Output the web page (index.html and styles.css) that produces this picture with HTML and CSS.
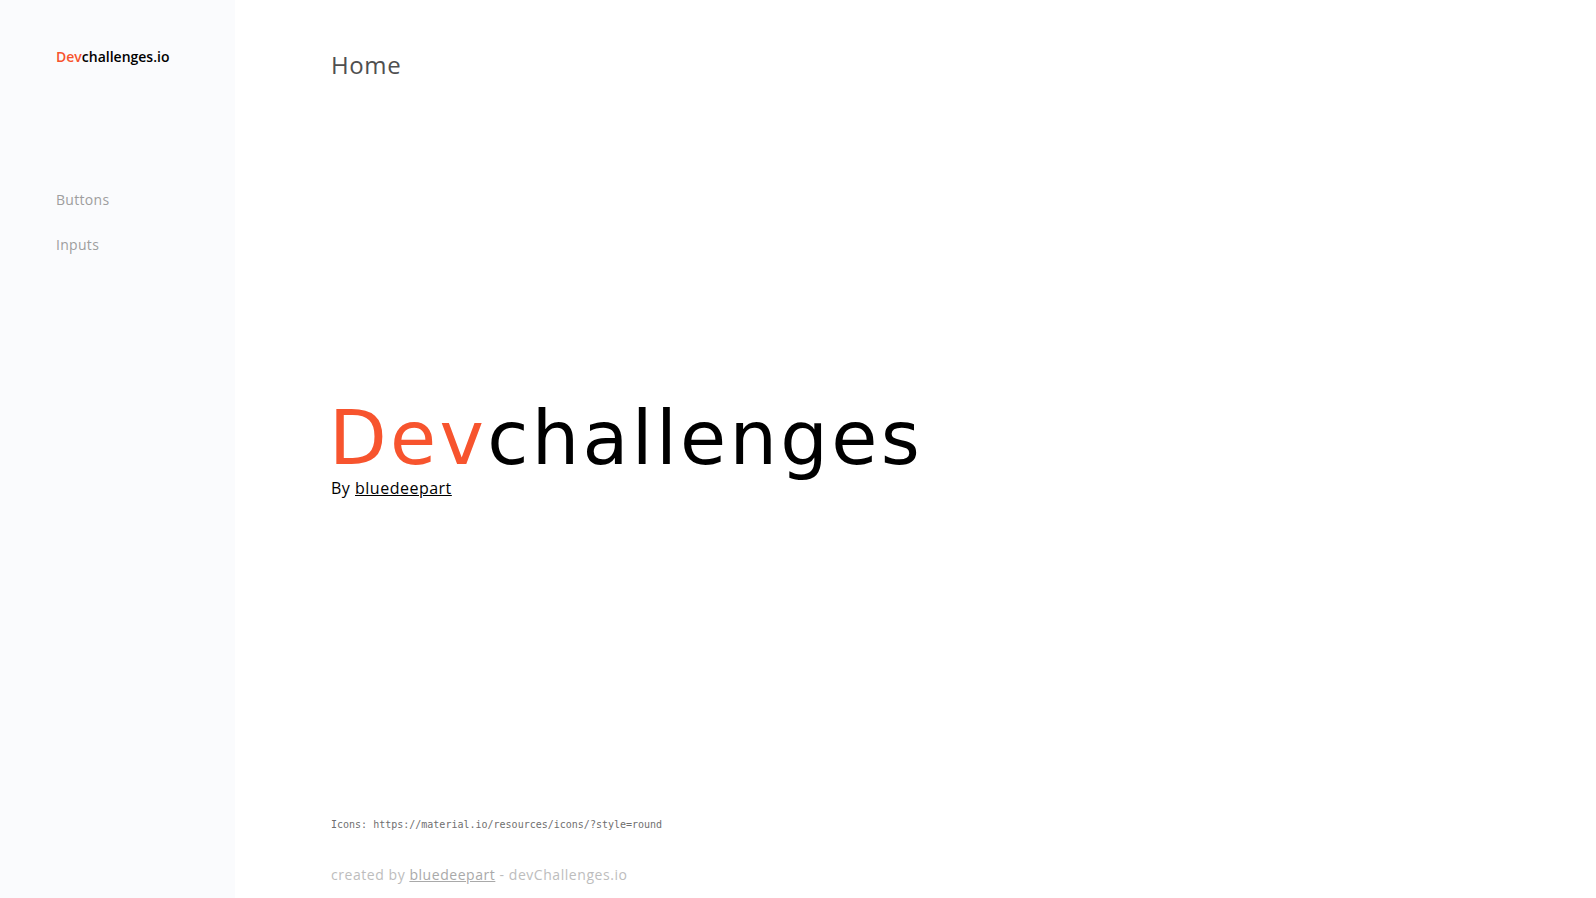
FILE: index.html
```html
<!DOCTYPE html>
<html lang="en">
<head>
<meta charset="utf-8">
<title>Devchallenges</title>
<link rel="stylesheet" href="styles.css">
</head>
<body>
<div class="app">
  <aside class="sidebar">
    <div class="logo"><span class="accent">Dev</span>challenges.io</div>
    <nav class="nav">
      <a class="nav-link" href="#">Buttons</a>
      <a class="nav-link" href="#">Inputs</a>
    </nav>
  </aside>
  <main class="main">
    <h1 class="page-title">Home</h1>
    <section class="hero">
      <h2 class="hero-title"><span class="accent">Dev</span>challenges</h2>
      <p class="hero-by">By <a href="#">bluedeepart</a></p>
    </section>
    <footer class="footer">
      <p class="icons-note">Icons: https://material.io/resources/icons/?style=round</p>
      <p class="credit">created by <a href="#">bluedeepart</a> - devChallenges.io</p>
    </footer>
  </main>
</div>
</body>
</html>
```
FILE: styles.css
```css
* { box-sizing: border-box; }
html, body { margin: 0; padding: 0; }
body {
  font-family: "Open Sans", "Noto Sans", sans-serif;
  background: #fff;
  color: #000;
}
.app {
  display: flex;
  height: 898px;
}
.sidebar {
  width: 235px;
  flex: none;
  background: #fafbfd;
  padding: 47px 0 0 56px;
}
.logo {
  font-size: 14px;
  font-weight: 600;
  color: #000;
}
.accent { color: #f7542e; }
.nav {
  display: flex;
  flex-direction: column;
  gap: 25px;
  margin-top: 124px;
}
.nav-link {
  font-size: 14px;
  color: #9e9e9e;
  text-decoration: none;
  line-height: 20px;
  letter-spacing: 0.3px;
}
.main {
  flex: 1;
  display: flex;
  flex-direction: column;
  padding: 0 0 0 96px;
}
.page-title {
  margin: 49px 0 0;
  font-size: 24px;
  font-weight: 400;
  color: #4f4f4f;
  line-height: 32px;
  letter-spacing: 0.6px;
}
.hero {
  margin-top: 317px;
}
.hero-title {
  margin: 0;
  font-family: "DejaVu Sans", "Open Sans", sans-serif;
  font-size: 75px;
  font-weight: 400;
  line-height: 80px;
  letter-spacing: 3.3px;
  margin-left: -2px;
}
.hero-by {
  margin: 0;
  font-size: 16px;
  line-height: 20px;
  color: #000;
  letter-spacing: 0.5px;
}
.hero-by a { color: #000; }
.footer {
  margin-top: auto;
  padding-bottom: 14px;
}
.icons-note {
  margin: 0;
  font-family: "DejaVu Sans Mono", monospace;
  font-size: 10px;
  color: #6f6f6f;
}
.credit {
  margin: 35px 0 0;
  font-size: 14px;
  color: #bdbdbd;
  letter-spacing: 0.55px;
}
.credit a { color: #a9a9a9; }
```
